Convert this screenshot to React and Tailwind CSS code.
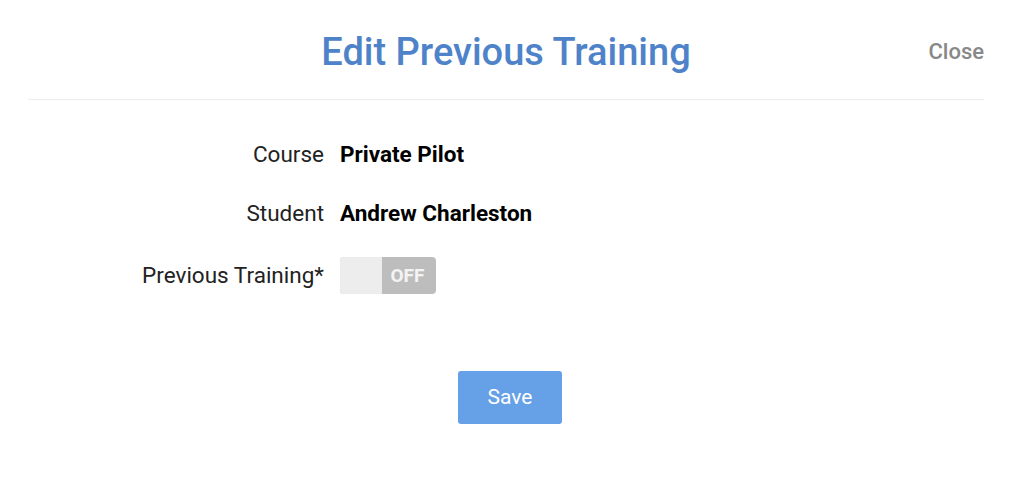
import React, { useState } from "react";

export default function App() {
  const [previous, setPrevious] = useState(false);

  return (
    <div className="w-[1014px] h-[478px] bg-white pl-[28px] pr-[30px] font-['Roboto',sans-serif]">
      {/* Header */}
      <div className="h-[100px] grid grid-cols-[1fr_auto_1fr] items-center border-b border-[#ececec] pt-[4px]">
        <div />
        <h1 className="text-[38px] font-medium text-[#4f83c9] leading-none">Edit Previous Training</h1>
        <div className="flex justify-end">
          <button className="text-[22px] font-medium text-[#888888] leading-none">Close</button>
        </div>
      </div>

      {/* Fields */}
      <div className="pt-[36px] text-[22.5px] leading-none">
        <div className="h-[37px] flex items-center">
          <div className="w-[296px] text-right text-[#222222]">Course</div>
          <div className="ml-[16px] font-bold text-black">Private Pilot</div>
        </div>
        <div className="h-[37px] mt-[22px] flex items-center">
          <div className="w-[296px] text-right text-[#222222]">Student</div>
          <div className="ml-[16px] font-bold text-black">Andrew Charleston</div>
        </div>
        <div className="h-[37px] mt-[25px] flex items-center">
          <div className="w-[296px] text-right text-[#222222]">Previous Training*</div>
          <button
            onClick={() => setPrevious(!previous)}
            className="ml-[16px] w-[96px] h-[37px] rounded-[4px] overflow-hidden flex bg-[#bdbdbd]"
          >
            <span className="w-[42px] h-full bg-[#ededed]" />
            <span className="flex-1 h-full flex items-center justify-center pr-[3px] text-[19px] font-bold text-[#f4f4f4]">
              OFF
            </span>
          </button>
        </div>
      </div>

      {/* Footer */}
      <div className="mt-[77px] flex justify-center pl-[8px]">
        <button className="w-[104px] h-[53px] rounded-[3px] bg-[#66a1e8] text-white text-[21px]">Save</button>
      </div>
    </div>
  );
}
